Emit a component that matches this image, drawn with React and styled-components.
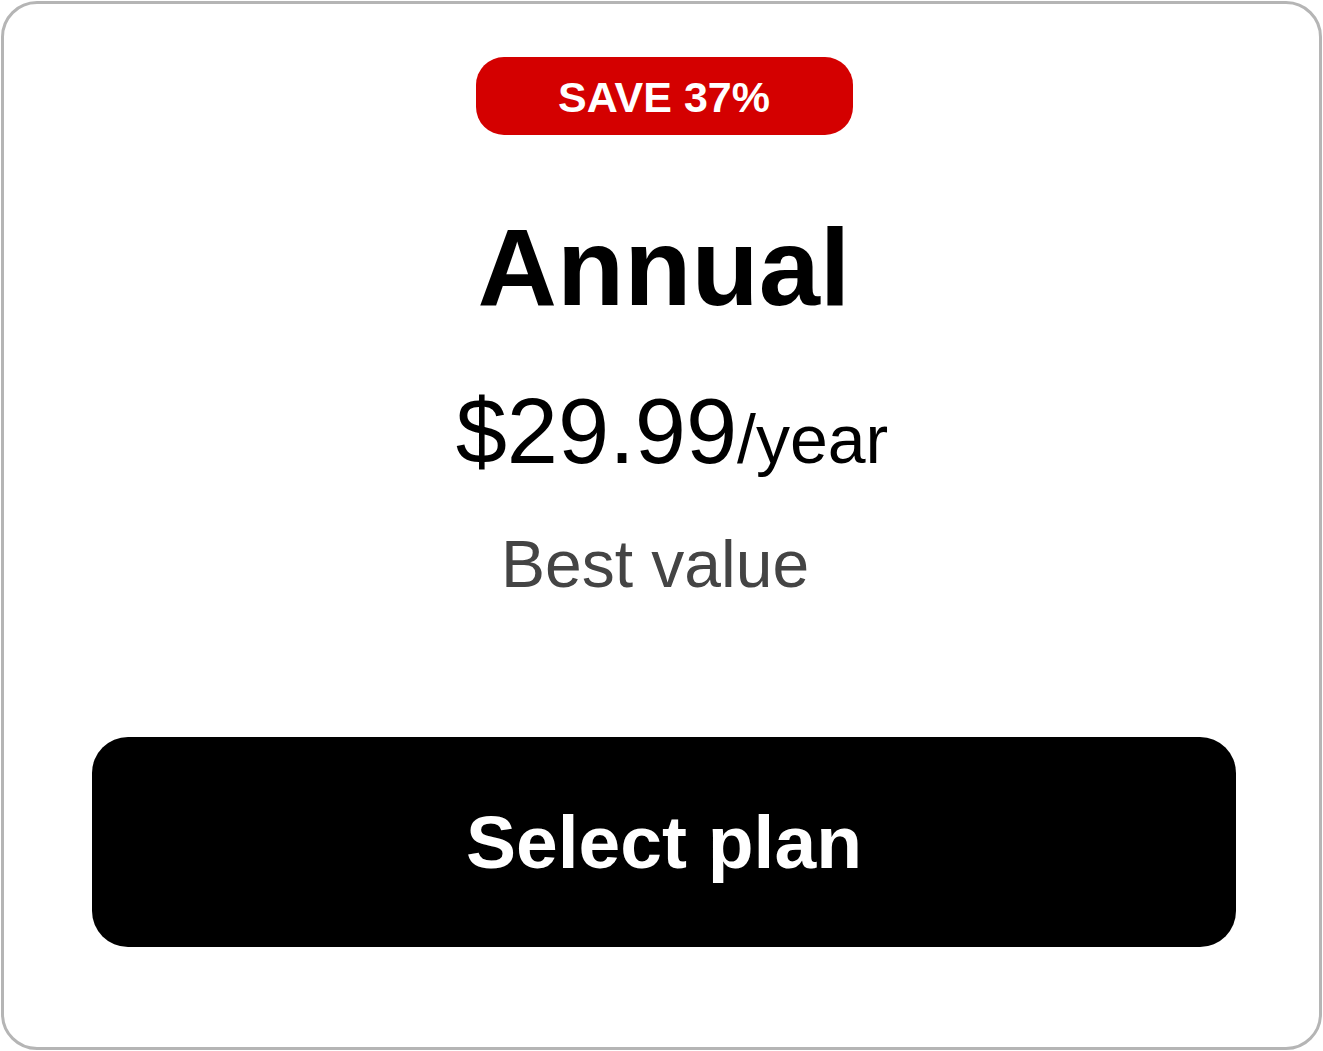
import React from "react";
import styled, { createGlobalStyle } from "styled-components";

const Global = createGlobalStyle`
  html, body {
    margin: 0;
    padding: 0;
    background: #ffffff;
  }
  body {
    font-family: "Liberation Sans", Arial, sans-serif;
  }
`;

const App = () => {
  return (
    <>
      <Global />
      <Card>
        <Badge>SAVE 37%</Badge>
        <Title>Annual</Title>
        <Price>
          $29.99<Period>/year</Period>
        </Price>
        <Note>Best value</Note>
        <SelectButton type="button">Select plan</SelectButton>
      </Card>
    </>
  );
};

//styled components
const Card = styled.div`
  box-sizing: border-box;
  width: calc(100vw - 2px);
  height: calc(100vh - 2px);
  margin: 1px;
  border: 3px solid #b5b5b5;
  border-radius: 36px;
  background: #ffffff;
  padding: 53px 83px 0 88px;
  display: flex;
  flex-direction: column;
  align-items: center;
  overflow: hidden;
`;

const Badge = styled.div`
  box-sizing: border-box;
  height: 78px;
  width: 377px;
  display: flex;
  align-items: center;
  justify-content: center;
  background: #d40000;
  color: #ffffff;
  border-radius: 28px;
  font-size: 43px;
  font-weight: 700;
  line-height: 1;
  padding-top: 2px;
`;

const Title = styled.h1`
  margin: 77px 0 0;
  font-size: 110px;
  font-weight: 700;
  line-height: 1;
  color: #000000;
`;

const Price = styled.div`
  margin-top: 63px;
  padding-left: 16px;
  font-size: 92px;
  line-height: 1;
  color: #000000;
`;

const Period = styled.span`
  font-size: 68px;
  line-height: 1;
`;

const Note = styled.p`
  margin: 54px 0 0;
  padding-right: 18px;
  font-size: 66px;
  line-height: 1;
  color: #444444;
`;

const SelectButton = styled.button`
  margin-top: 140px;
  width: 100%;
  height: 210px;
  border: none;
  border-radius: 36px;
  background: #000000;
  color: #ffffff;
  font-family: "Liberation Sans", Arial, sans-serif;
  font-size: 75px;
  font-weight: 700;
  cursor: pointer;
`;

export default App;
